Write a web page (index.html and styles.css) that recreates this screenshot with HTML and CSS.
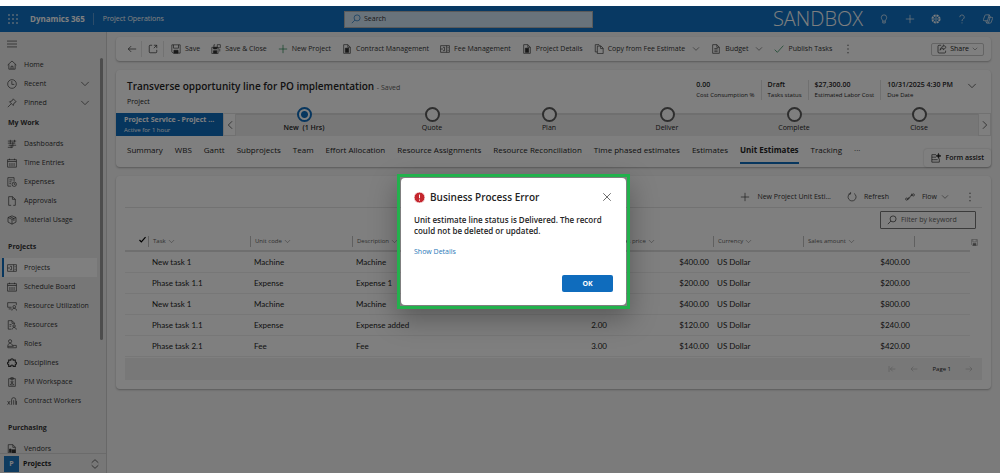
FILE: index.html
```html
<!DOCTYPE html>
<html lang="en">
<head>
<meta charset="utf-8">
<title>Project Operations</title>
<link rel="stylesheet" href="styles.css">
</head>
<body>
<svg class="sprite" aria-hidden="true">
  <symbol id="chev" viewBox="0 0 12 12"><path d="M1.5 3.5 6 8l4.500-4.500"/></symbol>
  <symbol id="plus" viewBox="0 0 12 12"><path d="M6 1v10M1 6h10"/></symbol>
  <symbol id="left" viewBox="0 0 12 12"><path d="M11 6H1.500M5 2.500 1.500 6 5 9.500"/></symbol>
  <symbol id="right" viewBox="0 0 12 12"><path d="M1 6h9.500M7 2.500 10.500 6 7 9.500"/></symbol>
  <symbol id="first" viewBox="0 0 12 12"><path d="M11 6H3.500M7 2.500 3.500 6 7 9.500M1.500 1.500v9"/></symbol>
  <symbol id="doc" viewBox="0 0 12 12"><path d="M2 .8h5L10 4v7.200H2zM7 .8V4h3M4 5.500h4M4 7.300h4M4 9.200h4"/></symbol>
  <symbol id="docfill" viewBox="0 0 12 12"><path d="M2 .8h5L10 4v7.200H2zM7 .8V4h3"/><path fill="currentColor" d="M4 5h4v5H4z"/></symbol>
  <symbol id="copy" viewBox="0 0 12 12"><path d="M4 2.500h4.500L11 5v6.500H4zM8 2.500V5.500h3M4 9.500H1.500V.8H6l1.500 1.500"/></symbol>
  <symbol id="disk" viewBox="0 0 12 12"><path d="M1 1h10v10H2.500L1 9.500zM3 1v4h6V1"/><path fill="currentColor" d="M3.500 7.500h5V11h-5z"/></symbol>
  <symbol id="diskclose" viewBox="0 0 12 12"><path d="M1 4h7.500v7.500H1zM5 1H3.500v3M7.500.8h3.700v3.700H7.500zM10.500 6v3"/><path fill="currentColor" d="M3 8h4v3H3zM3 4h4v2H3z"/></symbol>
  <symbol id="card" viewBox="0 0 12 12"><path d="M.7 2h10.600v8H.7zM.7 6h3M8 2v8M3.500 4h2v4h-2M9 4.500h1.500M9 7.500h1.500"/></symbol>
  <symbol id="popout" viewBox="0 0 12 12"><path d="M5 1.500H2.500a1 1 0 0 0-1 1v7a1 1 0 0 0 1 1h7a1 1 0 0 0 1-1V7M7 1.500h3.500V5M10.500 1.500 7 5"/></symbol>
  <symbol id="check" viewBox="0 0 12 12"><path d="M.8 6.800 4 10l7.200-8"/></symbol>
  <symbol id="share" viewBox="0 0 12 12"><path d="M5 1.500H2.500a1.300 1.300 0 0 0-1.300 1.300v6.700a1.300 1.300 0 0 0 1.300 1.300h6.500a1.300 1.300 0 0 0 1.300-1.300V8M7.500 1l3.500 3-3.500 3V5.200C5.500 5.200 4.500 6 3.700 7.500c.2-2.500 1.300-4 3.800-4.500z"/></symbol>
  <symbol id="mag" viewBox="0 0 12 12"><circle cx="7.300" cy="4.700" r="3.600"/><path d="M4.700 7.300 1 11"/></symbol>
  <symbol id="bulb" viewBox="0 0 12 12"><path d="M4.500 8.500C4.500 7 2.800 6.500 2.800 4.200a3.200 3.200 0 0 1 6.400 0c0 2.300-1.700 2.800-1.700 4.300zM4.500 8.500v2.300h3V8.500"/></symbol>
  <symbol id="gear" viewBox="0 0 12 12"><circle cx="6" cy="6" r="4.700" stroke-dasharray="2.600 1.100" stroke-width="1.400"/><circle cx="6" cy="6" r="3.600"/><circle cx="6" cy="6" r="1.500"/></symbol>
  <symbol id="help" viewBox="0 0 12 12"><path d="M3.300 3.800a2.700 2.700 0 1 1 4 2.400C6.300 6.800 6 7.200 6 8.500M6 10v1.300"/></symbol>
  <symbol id="copilot" viewBox="0 0 12 12"><path d="M4 1h3.500L9 4h1.500a1 1 0 0 1 1 1.400L9.800 10a1.500 1.500 0 0 1-1.400 1H4.500L3 8H1.500a1 1 0 0 1-1-1.400L2.200 2A1.500 1.500 0 0 1 4 1zM7.500 1 4.500 11M3 8h2M7 4h2M8.500 4l-2 7"/></symbol>
  <symbol id="menu" viewBox="0 0 12 12"><path d="M0 2.500h12M0 6h12M0 9.500h12"/></symbol>
  <symbol id="home" viewBox="0 0 12 12"><path d="M.8 6 6 1.200 11.200 6M2.200 5v6h7.600V5M4.800 11V7.500h2.400V11"/></symbol>
  <symbol id="clock" viewBox="0 0 12 12"><circle cx="6" cy="6" r="5.200"/><path d="M5.800 2.500v4h3"/></symbol>
  <symbol id="pin" viewBox="0 0 12 12"><path d="M7.500 1 11 4.500 8.500 6 7.500 9 3 4.500 6 3.500zM5.200 6.800 1 11"/></symbol>
  <symbol id="dash" viewBox="0 0 12 12"><path d="M1 2.500h10M1 5h9M2 7.500h9M1 10h6M4 1v5M7 3.500v6M9 1v3M5 7v4"/></symbol>
  <symbol id="cal" viewBox="0 0 12 12"><path d="M.7 2h10.600v9H.7zM.7 4.200h10.600M3 .8V2.500M9 .8V2.500M3.500 6v4M6 6v4M8.500 6v4"/></symbol>
  <symbol id="exp" viewBox="0 0 12 12"><path d="M5 11H1V.8h7.500V5M2.800 3.500h3.800M2.800 5.800h2.500M2.800 8h2"/><circle cx="8.700" cy="8.700" r="2.600"/><path d="M8.700 7.200v1.700H10"/></symbol>
  <symbol id="page" viewBox="0 0 12 12"><path d="M5 11.200H2V.8h4.500L10 4v7.200H7.500M6.500.8V4H10"/></symbol>
  <symbol id="box" viewBox="0 0 12 12"><path d="M6 1 1.200 3v5.500L6 11l4.800-2.500V3zM1.200 3 6 5.200 10.800 3M6 5.200V11M3.500 2 8.300 4.200v3"/></symbol>
  <symbol id="util" viewBox="0 0 12 12"><path d="M5.500 7.500H.8V2h10.400v3M2 9.500h3.500"/><circle cx="8.700" cy="7" r="1.600"/><path d="M5.800 11.500c.2-3.500 5.600-3.500 5.800 0"/></symbol>
  <symbol id="resd" viewBox="0 0 12 12"><path d="M5 11H1.500V.8H6l3 3V5M6 .8V4h3M3 5.500h2.500M3 7.500h2"/><circle cx="8.500" cy="7.200" r="1.500"/><path d="M6 11.500c.2-3.300 5-3.300 5.200 0"/></symbol>
  <symbol id="role" viewBox="0 0 12 12"><circle cx="3.700" cy="2.700" r="1.900"/><path d="M1 10.500V8c0-3.500 5.300-3.500 5.300-.3h4.900v2.800zM1 8.800h7"/></symbol>
  <symbol id="puzzle" viewBox="0 0 12 12"><path stroke-width="1.300" d="M2 2.500h2.500c-.5-2 3.500-2 3 0H10V5c2-.5 2 3 0 2.500V10H7.500c.5-2-3.500-2-3 0H2V7.500C0 8 0 4.500 2 5z"/></symbol>
  <symbol id="clip" viewBox="0 0 12 12"><path d="M2 2h8v9.200H2zM4.500.8h3v2h-3z"/><circle cx="6" cy="5.800" r="1.200"/><path d="M4 9.500c0-2.500 4-2.500 4 0z"/></symbol>
  <symbol id="work" viewBox="0 0 12 12"><path d="M.7 10.500l3-4.500M.7 6l3 4.500M5.500 10.500V4.500a2.500 2.500 0 0 1 5 0v6M8 5v5.500M11.500 10.500V6"/></symbol>
  <symbol id="vend" viewBox="0 0 12 12"><path d="M1.500.8H7l3 3V11H1.500zM7 .8V4h3"/><path fill="currentColor" d="M3 6h2v4H3zM6 7h4v4H6z"/></symbol>
  <symbol id="updown" viewBox="0 0 12 12"><path d="M2 4.500 6 .8l4 3.700M2 7.500l4 3.700 4-3.700"/></symbol>
  <symbol id="assist" viewBox="0 0 12 12"><path d="M6 2H1v9h9V6.500M3 5h3M3 8h5M1 5h2M1 8h2"/><path fill="currentColor" d="M9 .5 9.700 2.700 12 3.500 9.700 4.300 9 6.500 8.300 4.300 6 3.500 8.300 2.700z"/></symbol>
  <symbol id="refresh" viewBox="0 0 12 12"><path d="M4 1.600A4.800 4.800 0 1 0 8.500 1.800M4.300.2v2.300H1.800"/></symbol>
  <symbol id="flow" viewBox="0 0 12 12"><circle cx="2" cy="8.500" r="1.300"/><circle cx="10" cy="3.500" r="1.300"/><path d="M3.500 8.500c3 0 2-5 5-5M5 6 3 9.500M8 2v3"/></symbol>
  <symbol id="x" viewBox="0 0 12 12"><path d="M1.500 1.500l9 9M10.500 1.500l-9 9"/></symbol>
  <symbol id="dots" viewBox="0 0 12 12"><path fill="currentColor" stroke="none" d="M5.300.8h1.400v1.400H5.300zM5.300 5.300h1.400v1.400H5.300zM5.300 9.800h1.400v1.400H5.300z"/></symbol>
</svg>

<div class="app">
  <header class="topbar">
    <div class="brand">
      <svg class="waffle" viewBox="0 0 10 10"><path d="M0 1h2M4 1h2M8 1h2M0 5h2M4 5h2M8 5h2M0 9h2M4 9h2M8 9h2"/></svg>
      <strong class="brand-name">Dynamics 365</strong>
      <span class="area-name">Project Operations</span>
    </div>
    <label class="search"><svg class="ic"><use href="#mag"/></svg><input type="text" placeholder="Search" aria-label="Search"></label>
    <div class="tools">
      <span class="env">SANDBOX</span>
      <button aria-label="Ideas"><svg class="ic"><use href="#bulb"/></svg></button>
      <button aria-label="Add"><svg class="ic"><use href="#plus"/></svg></button>
      <button aria-label="Settings"><svg class="ic"><use href="#gear"/></svg></button>
      <button aria-label="Help"><svg class="ic"><use href="#help"/></svg></button>
      <button aria-label="Copilot"><svg class="ic"><use href="#copilot"/></svg></button>
    </div>
  </header>

  <div class="body">
    <aside class="side">
      <nav class="nav">
        <button class="burger" aria-label="Menu"><svg class="ic"><use href="#menu"/></svg></button>
        <a class="item" href="#"><svg class="ic"><use href="#home"/></svg>Home</a>
        <a class="item" href="#"><svg class="ic"><use href="#clock"/></svg>Recent<svg class="ic end"><use href="#chev"/></svg></a>
        <a class="item" href="#"><svg class="ic"><use href="#pin"/></svg>Pinned<svg class="ic end"><use href="#chev"/></svg></a>
        <h2 class="group first">My Work</h2>
        <a class="item" href="#"><svg class="ic"><use href="#dash"/></svg>Dashboards</a>
        <a class="item" href="#"><svg class="ic"><use href="#cal"/></svg>Time Entries</a>
        <a class="item" href="#"><svg class="ic"><use href="#exp"/></svg>Expenses</a>
        <a class="item" href="#"><svg class="ic"><use href="#page"/></svg>Approvals</a>
        <a class="item" href="#"><svg class="ic"><use href="#box"/></svg>Material Usage</a>
        <h2 class="group">Projects</h2>
        <a class="item current" href="#"><svg class="ic"><use href="#card"/></svg>Projects</a>
        <a class="item" href="#"><svg class="ic"><use href="#cal"/></svg>Schedule Board</a>
        <a class="item" href="#"><svg class="ic"><use href="#util"/></svg>Resource Utilization</a>
        <a class="item" href="#"><svg class="ic"><use href="#resd"/></svg>Resources</a>
        <a class="item" href="#"><svg class="ic"><use href="#role"/></svg>Roles</a>
        <a class="item" href="#"><svg class="ic"><use href="#puzzle"/></svg>Disciplines</a>
        <a class="item" href="#"><svg class="ic"><use href="#clip"/></svg>PM Workspace</a>
        <a class="item" href="#"><svg class="ic"><use href="#work"/></svg>Contract Workers</a>
        <h2 class="group">Purchasing</h2>
        <a class="item" href="#"><svg class="ic"><use href="#vend"/></svg>Vendors</a>
      </nav>
      <div class="thumb"></div>
      <button class="switcher"><span class="tile">P</span>Projects<svg class="ic end"><use href="#updown"/></svg></button>
    </aside>

    <main class="main">
      <div class="card commands">
        <button class="sq" aria-label="Back"><svg class="ic"><use href="#left"/></svg></button>
        <button class="sq ruled" aria-label="Open in new window"><svg class="ic"><use href="#popout"/></svg></button>
        <button class="cmd"><svg class="ic"><use href="#disk"/></svg>Save</button>
        <button class="cmd"><svg class="ic"><use href="#diskclose"/></svg>Save &amp; Close</button>
        <button class="cmd"><svg class="ic green"><use href="#plus"/></svg>New Project</button>
        <button class="cmd"><svg class="ic"><use href="#docfill"/></svg>Contract Management</button>
        <button class="cmd"><svg class="ic"><use href="#card"/></svg>Fee Management</button>
        <button class="cmd"><svg class="ic"><use href="#docfill"/></svg>Project Details</button>
        <button class="cmd"><svg class="ic"><use href="#copy"/></svg>Copy from Fee Estimate<svg class="ic chev"><use href="#chev"/></svg></button>
        <button class="cmd"><svg class="ic"><use href="#doc"/></svg>Budget<svg class="ic chev"><use href="#chev"/></svg></button>
        <button class="cmd"><svg class="ic green"><use href="#check"/></svg>Publish Tasks</button>
        <button class="cmd" aria-label="More"><svg class="ic"><use href="#dots"/></svg></button>
        <button class="share"><svg class="ic"><use href="#share"/></svg>Share<svg class="ic tiny"><use href="#chev"/></svg></button>
      </div>

      <section class="card record">
        <div class="record-head">
          <div class="record-title">
            <h1>Transverse opportunity line for PO implementation <small>- Saved</small></h1>
            <p>Project</p>
          </div>
          <dl class="facts">
            <div><dd>0.00</dd><dt>Cost Consumption %</dt></div>
            <div><dd>Draft</dd><dt>Tasks status</dt></div>
            <div><dd>$27,300.00</dd><dt>Estimated Labor Cost</dt></div>
            <div><dd>10/31/2025 4:30 PM</dd><dt>Due Date</dt></div>
          </dl>
          <button class="expand" aria-label="Expand header"><svg class="ic"><use href="#chev"/></svg></button>
        </div>
        <div class="process">
          <button class="active-stage"><strong>Project Service - Project ...</strong><span>Active for 1 hour</span></button>
          <button class="step" aria-label="Previous stages"><svg class="ic turn-left"><use href="#chev"/></svg></button>
          <ol class="stages">
            <li class="now"><i></i>New &nbsp;(1 Hrs)</li>
            <li><i></i>Quote</li>
            <li><i></i>Plan</li>
            <li><i></i>Deliver</li>
            <li><i></i>Complete</li>
            <li><i></i>Close</li>
          </ol>
          <button class="step" aria-label="Next stages"><svg class="ic turn-right"><use href="#chev"/></svg></button>
        </div>
        <div class="tabrow">
          <nav class="tabs">
            <a href="#">Summary</a><a href="#">WBS</a><a href="#">Gantt</a><a href="#">Subprojects</a><a href="#">Team</a><a href="#">Effort Allocation</a><a href="#">Resource Assignments</a><a href="#">Resource Reconciliation</a><a href="#">Time phased estimates</a><a href="#">Estimates</a><a href="#" class="on">Unit Estimates</a><a href="#">Tracking</a><a href="#">···</a>
          </nav>
          <button class="assist"><svg class="ic"><use href="#assist"/></svg>Form assist</button>
        </div>
      </section>

      <section class="card grid">
        <div class="grid-tools">
          <button><svg class="ic"><use href="#plus"/></svg>New Project Unit Esti...</button>
          <button><svg class="ic"><use href="#refresh"/></svg>Refresh</button>
          <button><svg class="ic"><use href="#flow"/></svg>Flow<svg class="ic chev"><use href="#chev"/></svg></button>
          <button aria-label="More"><svg class="ic"><use href="#dots"/></svg></button>
        </div>
        <div class="filter-row">
          <label class="filter"><svg class="ic"><use href="#mag"/></svg><input type="text" placeholder="Filter by keyword" aria-label="Filter by keyword"></label>
        </div>
        <div class="table-wrap">
          <table>
            <colgroup><col class="c-check"><col class="c-std"><col class="c-std"><col><col class="c-std"><col class="c-std"><col class="c-cur"><col class="c-amt"><col class="c-end"></colgroup>
            <thead>
              <tr>
                <th class="tick"><svg class="ic"><use href="#check"/></svg></th>
                <th><span>Task<svg class="ic"><use href="#chev"/></svg></span></th>
                <th><span>Unit code<svg class="ic"><use href="#chev"/></svg></span></th>
                <th><span>Description<svg class="ic"><use href="#chev"/></svg></span></th>
                <th></th>
                <th><span>Sales price<svg class="ic"><use href="#chev"/></svg></span></th>
                <th><span>Currency<svg class="ic"><use href="#chev"/></svg></span></th>
                <th><span>Sales amount<svg class="ic"><use href="#chev"/></svg></span></th>
                <th><span></span></th>
              </tr>
            </thead>
            <tbody>
              <tr><td></td><td>New task 1</td><td>Machine</td><td>Machine</td><td class="num"></td><td class="num">$400.00</td><td>US Dollar</td><td class="num">$400.00</td><td></td></tr>
              <tr><td></td><td>Phase task 1.1</td><td>Expense</td><td>Expense 1</td><td class="num"></td><td class="num">$200.00</td><td>US Dollar</td><td class="num">$200.00</td><td></td></tr>
              <tr><td></td><td>New task 1</td><td>Machine</td><td>Machine</td><td class="num"></td><td class="num">$400.00</td><td>US Dollar</td><td class="num">$800.00</td><td></td></tr>
              <tr><td></td><td>Phase task 1.1</td><td>Expense</td><td>Expense added</td><td class="num">2.00</td><td class="num">$120.00</td><td>US Dollar</td><td class="num">$240.00</td><td></td></tr>
              <tr><td></td><td>Phase task 2.1</td><td>Fee</td><td>Fee</td><td class="num">3.00</td><td class="num">$140.00</td><td>US Dollar</td><td class="num">$420.00</td><td></td></tr>
            </tbody>
          </table>
          <svg class="ic save-grid"><use href="#disk"/></svg>
        </div>
        <div class="pager">
          <button aria-label="First page"><svg class="ic"><use href="#first"/></svg></button>
          <button aria-label="Previous page"><svg class="ic"><use href="#left"/></svg></button>
          <span>Page 1</span>
          <button aria-label="Next page"><svg class="ic"><use href="#right"/></svg></button>
        </div>
      </section>
    </main>
  </div>

  <div class="overlay">
    <div class="frame">
      <div class="dialog" role="alertdialog" aria-labelledby="dlg-title">
        <div class="dialog-head">
          <svg class="alert" viewBox="0 0 12 12"><circle cx="6" cy="6" r="6"/><path d="M6 2.800v4M6 8.200v1.300"/></svg>
          <h2 id="dlg-title">Business Process Error</h2>
          <button aria-label="Close"><svg class="ic"><use href="#x"/></svg></button>
        </div>
        <p>Unit estimate line status is Delivered. The record could not be deleted or updated.</p>
        <a class="details" href="#">Show Details</a>
        <button class="ok">OK</button>
      </div>
    </div>
  </div>
</div>
</body>
</html>
```
FILE: styles.css
```css
* { box-sizing: border-box; }
body { margin: 0; font: 7px/12px "Open Sans", "Noto Sans", sans-serif; color: #242424; background: #fff; }
button, input { font: inherit; color: inherit; background: none; border: 0; padding: 0; margin: 0; }
a { color: inherit; text-decoration: none; }
h1, h2, p, dl, dd, ol { margin: 0; padding: 0; }
.sprite { display: none; }
.ic { width: 10px; height: 10px; flex: none; fill: none; stroke: currentColor; stroke-width: .8; }
.green { color: #107c41; }

.app { position: relative; height: 100vh; padding-top: 6px; display: flex; flex-direction: column; overflow: hidden; }

.topbar { flex: none; height: 26px; display: grid; grid-template-columns: 344fr 249fr 407fr; align-items: center; background: #1173c6; color: #fff; }
.brand { display: flex; align-items: center; padding-left: 8px; }
.waffle { width: 10px; height: 10px; stroke: #fff; stroke-width: 1; }
.brand-name { margin-left: 12px; font-size: 8px; }
.area-name { margin-left: 8px; padding-left: 9px; border-left: 1px solid #5a9bd5; }
.search { display: flex; align-items: center; gap: 3px; height: 17px; padding: 0 6px; background: #d3e6f6; border: 1px solid #b4b4b4; color: #0f6cbd; }
.search input { flex: 1; min-width: 0; }
.search input::placeholder { color: #333; opacity: 1; }
.tools { display: flex; justify-content: flex-end; align-items: center; gap: 16px; padding-right: 7px; }
.tools button { display: flex; }
.env { font: 300 20px/24px "Open Sans", sans-serif; }

.body { flex: 1; min-height: 0; display: flex; }
.side { position: relative; flex: none; width: 107px; display: flex; flex-direction: column; background: #efefef; border-right: 1px solid #d0d0d0; }
.nav { flex: 1; min-height: 0; overflow: hidden; color: #333; }
.burger { display: flex; align-items: center; height: 23px; padding-left: 7px; }
.item { display: flex; align-items: center; gap: 7px; height: 19px; width: 97px; padding-left: 7px; white-space: nowrap; }
.item .end { margin-left: auto; margin-right: 7px; }
.current { background: #fff; box-shadow: inset 2px 0 #efefef, inset 4px 0 #0f6cbd; }
.group { height: 22px; margin-top: 7px; padding-left: 8px; font-size: 7px; line-height: 22px; font-weight: 700; }
.group.first { margin-top: 0; }
.thumb { position: absolute; top: 26px; right: 3px; width: 3px; height: 282px; border-radius: 2px; background: #9a9a9a; }
.switcher { flex: none; height: 20px; display: flex; align-items: center; gap: 4px; padding-left: 4px; border-top: 1px solid #d6d6d6; font-weight: 700; }
.tile { width: 15px; height: 16px; line-height: 15px; background: #1f78c1; color: #fff; }
.switcher .end { margin-left: auto; margin-right: 6px; }

.main { flex: 1; min-width: 0; display: flex; flex-direction: column; gap: 9px; padding: 5px 9px 0; background: #f6f6f6; }
.card { background: #fff; border-radius: 4px; box-shadow: 0 1px 2px rgba(0, 0, 0, .28); }

.commands { display: flex; align-items: center; height: 24px; padding: 0 7px; white-space: nowrap; }
.commands button { display: flex; align-items: center; }
.commands .sq { width: 17px; height: 16px; justify-content: center; }
.commands .ruled { width: 23px; margin: 0 7px 0 1px; border-left: 1px solid #e4e4e4; border-right: 1px solid #e4e4e4; }
.cmd { gap: 4px; margin-right: 11px; color: #333; }
.commands .chev, .grid-tools .chev { width: 8px; height: 8px; margin-left: 3px; }
.commands .share { margin-left: auto; height: 13px; gap: 3px; padding: 0 5px; border: 1px solid #c8c8c8; border-radius: 2px; }
.tiny { width: 6px; height: 6px; }

.record-head { display: flex; height: 42px; padding: 8px 14px 0 11px; }
.record-title { flex: 1; min-width: 0; white-space: nowrap; }
h1 { font-size: 10px; line-height: 16px; font-weight: 600; }
h1 small { font-size: 7px; font-weight: 400; color: #616161; }
.facts { display: flex; padding-top: 2px; height: 22px; font-size: 6px; line-height: 10px; white-space: nowrap; }
.facts div { display: flex; flex-direction: column; padding: 0 6px; }
.facts div + div { border-left: 1px solid #e0e0e0; }
.facts dd { font-size: 7px; line-height: 10px; font-weight: 600; }
.expand { display: flex; align-self: flex-start; margin: 3px 0 0 8px; }

.process { display: flex; height: 24px; padding-top: 1px; }
.active-stage { width: 107px; padding-left: 8px; text-align: left; background: #0f6cbd; color: #fff; font-size: 6px; line-height: 10px; white-space: nowrap; }
.active-stage strong { display: block; font-size: 7px; font-weight: 700; }
.active-stage span { display: block; }
.step { width: 13px; display: flex; align-items: center; justify-content: center; border: 1px solid #e2e2e2; }
.turn-left { transform: rotate(90deg); }
.turn-right { transform: rotate(-90deg); }
.stages { flex: 1; display: grid; grid-template-columns: 136fr 120fr 114fr 122fr 132fr 118fr; list-style: none; background: #efefef; border-top: 2px solid #dedede; }
.stages li { display: flex; flex-direction: column; align-items: center; line-height: 11px; }
.stages i { flex: none; width: 15px; height: 15px; margin-top: -8px; border: 2px solid #5c5c5c; border-radius: 50%; background: #fff; }
.now { font-weight: 600; }
.stages .now i { border-color: #0f6cbd; background: radial-gradient(#0f6cbd 3px, #fff 4px); }

.tabrow { display: flex; justify-content: space-between; height: 31px; padding-left: 11px; }
.tabs { display: flex; gap: 12px; font-size: 8px; white-space: nowrap; }
.tabs a { height: 28px; line-height: 28px; }
.tabs .on { font-weight: 700; border-bottom: 2px solid #0f6cbd; }
.assist { align-self: flex-end; display: flex; align-items: center; gap: 4px; height: 18px; padding: 0 7px; font-weight: 600; border-radius: 3px; box-shadow: 0 0 2px rgba(0, 0, 0, .25); white-space: nowrap; }

.grid { padding: 10px 9px 9px; }
.grid-tools { display: flex; justify-content: flex-end; gap: 16px; height: 22px; padding-right: 7px; border-bottom: 1px solid #e4e4e4; color: #333; }
.grid-tools button { display: flex; align-items: center; gap: 7px; }
.grid-tools .chev { margin-left: -3px; }
.filter-row { display: flex; justify-content: flex-end; padding: 3px 6px 3px 0; }
.filter { display: flex; align-items: center; gap: 4px; width: 96px; height: 18px; padding: 0 6px; border: 1px solid #777; border-radius: 1px; }
.filter input { flex: 1; min-width: 0; }
.filter input::placeholder { color: #616161; opacity: 1; }
.table-wrap { display: flex; }
table { flex: 1; width: 100%; table-layout: fixed; border-collapse: collapse; }
.c-check { width: 23px; }
.c-std { width: 102px; }
.c-cur { width: 90px; }
.c-amt { width: 111px; }
.c-end { width: 56px; }
th { height: 19px; padding: 0; font-size: 6px; font-weight: 400; text-align: left; color: #616161; border-bottom: 2px solid #dedede; }
th span { display: flex; align-items: center; gap: 2px; height: 11px; padding-left: 4px; border-left: 1px solid #c0c0c0; white-space: nowrap; }
th .ic { width: 7px; height: 7px; }
.tick { color: #000; text-align: right; padding-right: 2px; }
.tick .ic { stroke-width: 2; }
td { height: 21px; padding: 0 4px; font-family: Lato, "Open Sans", sans-serif; font-size: 8px; border-bottom: 1px solid #efefef; white-space: nowrap; }
.num { text-align: right; }
.save-grid { width: 7px; height: 7px; margin: 7px 4px 0 1px; color: #777; }
.pager { display: flex; justify-content: flex-end; align-items: center; gap: 14px; height: 22px; padding-right: 9px; margin-top: 1px; background: #f0f0f0; font-size: 6px; }
.pager button { display: flex; color: #aaa; }
.pager .ic { width: 8px; height: 8px; }

.overlay { position: absolute; inset: 6px 0 0; display: flex; align-items: center; justify-content: center; padding: 4px 0 0 27px; background: rgba(0, 0, 0, .5); }
.frame { width: 233px; padding: 1px; border: 3px solid #22b14c; box-shadow: 0 10px 26px rgba(0, 0, 0, .3); }
.dialog { display: flex; flex-direction: column; padding: 11px 13px 13px; background: #fff; border-radius: 4px; }
.dialog-head { display: flex; align-items: center; gap: 5px; height: 16px; }
.alert { width: 11px; height: 11px; fill: #c4262e; stroke: #fff; }
.dialog h2 { flex: 1; font-size: 10px; font-weight: 600; }
.dialog-head button { display: flex; margin-right: 1px; }
.dialog p { margin-top: 9px; font-size: 8px; line-height: 11px; font-weight: 600; }
.details { margin-top: 10px; color: #1f78b8; }
.ok { align-self: flex-end; width: 51px; height: 17px; margin-top: 17px; border-radius: 2px; background: #0f6cbd; color: #fff; font-weight: 700; }
```
